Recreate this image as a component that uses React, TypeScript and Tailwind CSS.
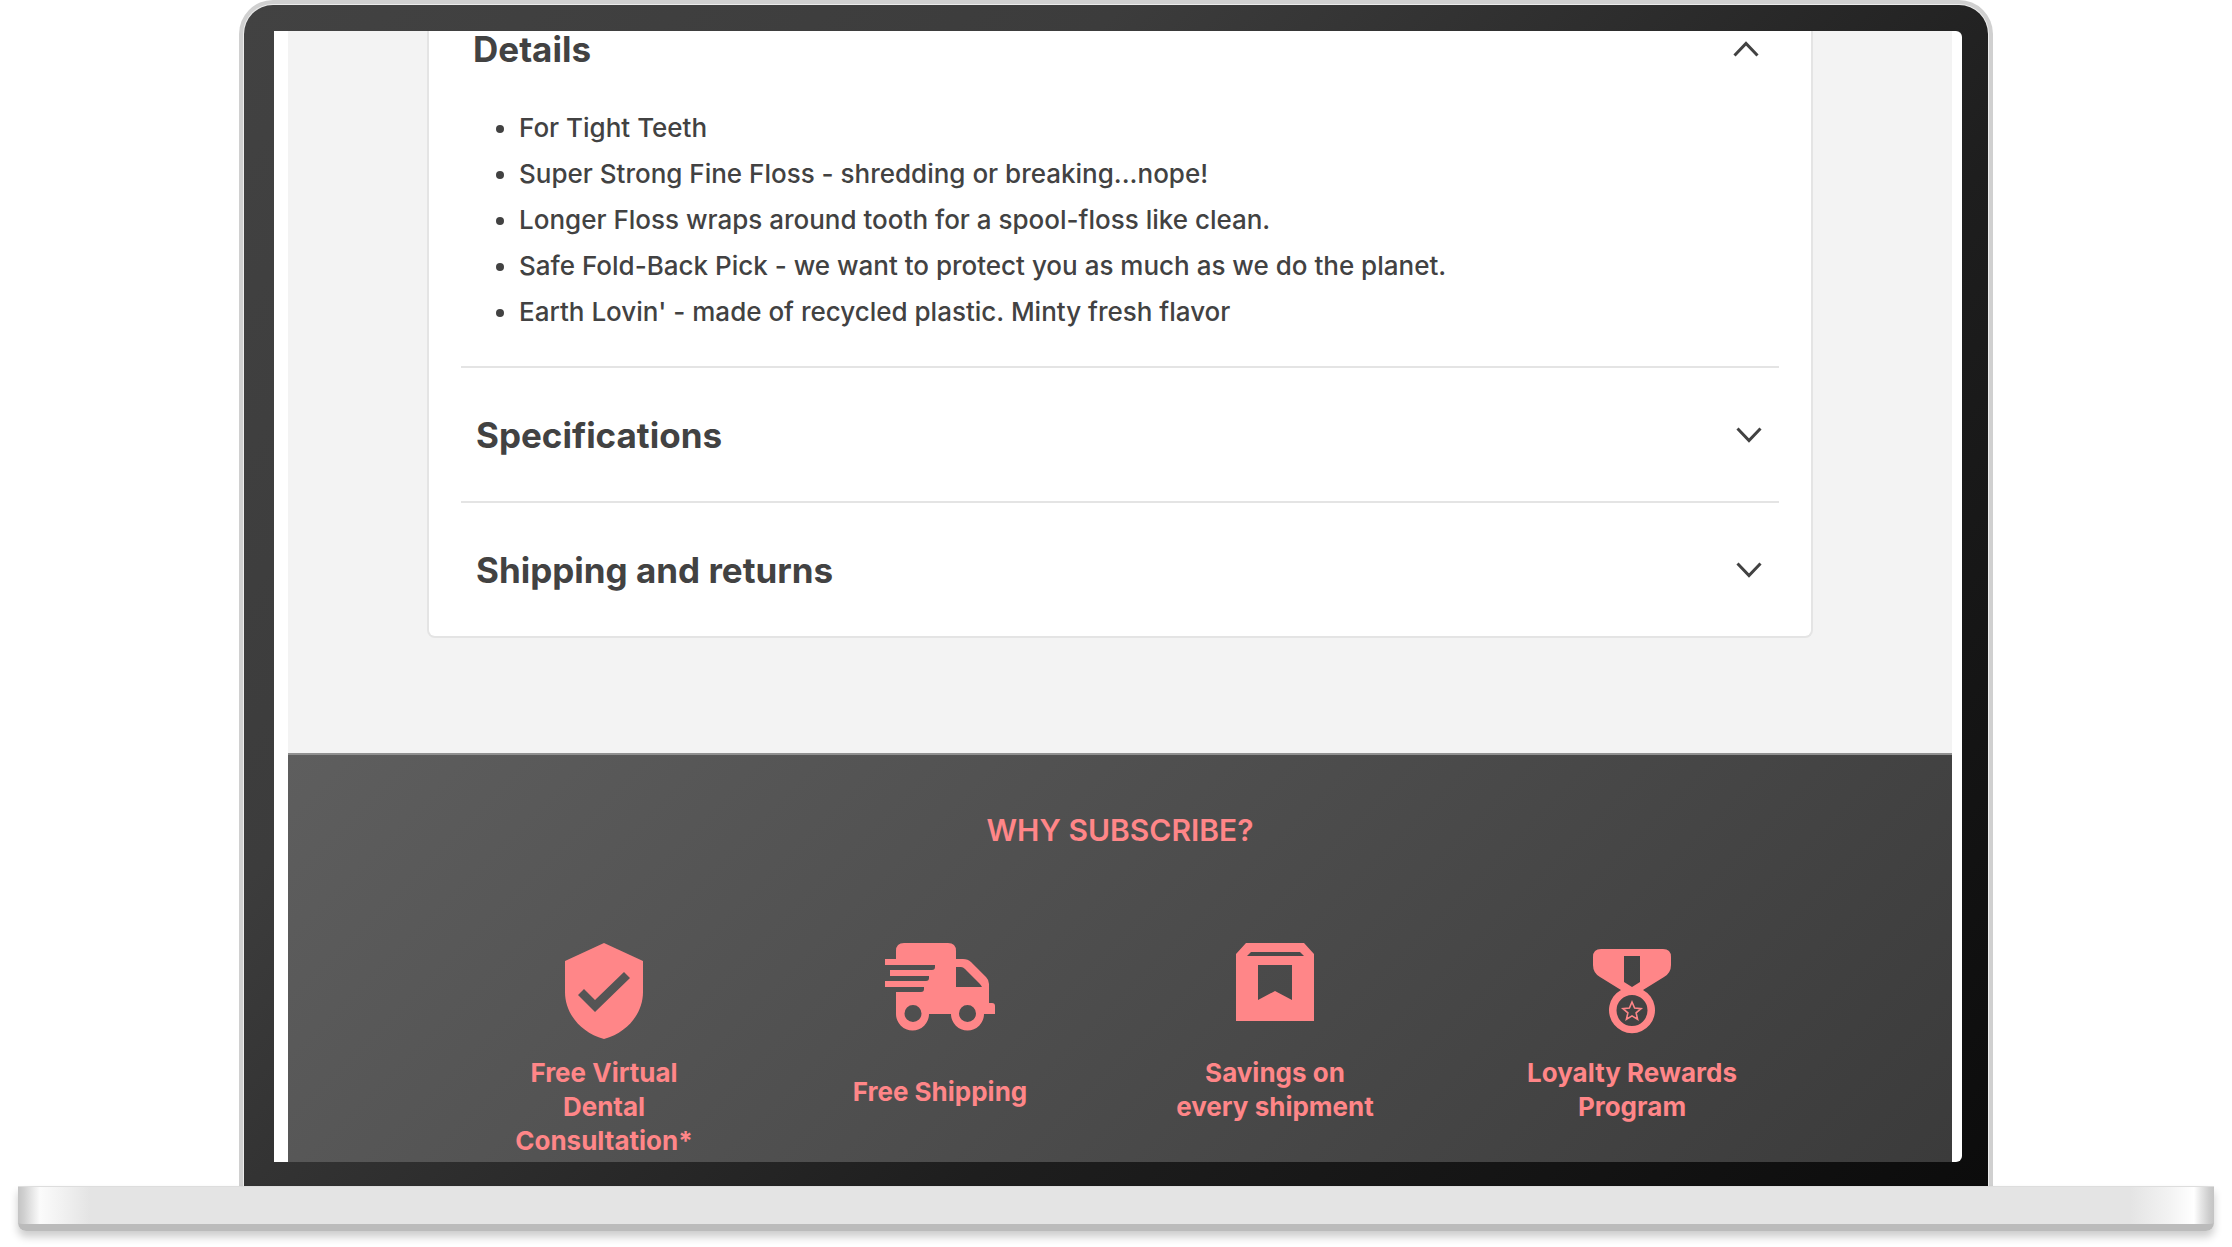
import { useState, type ReactNode } from "react";

const details = [
  "For Tight Teeth",
  "Super Strong Fine Floss - shredding or breaking...nope!",
  "Longer Floss wraps around tooth for a spool-floss like clean.",
  "Safe Fold-Back Pick - we want to protect you as much as we do the planet.",
  "Earth Lovin' - made of recycled plastic. Minty fresh flavor",
];

function Chevron({ open }: { open: boolean }) {
  return (
    <svg width="26" height="16" viewBox="0 0 26 16" fill="none" stroke="currentColor" strokeWidth="3">
      <path d={open ? "M1.5 14.5 13 2.5l11.5 12" : "M1.5 1.5 13 13.5l11.5-12"} />
    </svg>
  );
}

function Shield() {
  return (
    <svg width="80" height="96" viewBox="0 0 80 96" fill="currentColor">
      <path
        fillRule="evenodd"
        d="M40 0 79 18v31c0 20-14 40-39 47C15 89 1 69 1 49V18zM60 29 31 57l-11-11-6 6 17 17 35-34z"
      />
    </svg>
  );
}

function Truck() {
  return (
    <svg width="110" height="88" viewBox="0 0 110 88" fill="currentColor">
      <path
        fillRule="evenodd"
        d="M11 16V8q0-8 8-8h44q8 0 8 8v8h7q5 0 8 3l15 15q3 3 3 7v19h3q3 0 3 3v8H99a16.500 16.500 0 1 1-33 0H44a16.500 16.500 0 1 1-33 0V49h25q3 0 3-3v-2H0v-6h41q3 0 3-3v-2H5v-6h42q3 0 3-3v-2H0v-6zM71 24v20h26q-1-2-3-4L80 26q-2-2-4-2zM28 62a8.500 8.500 0 1 0 0 17a8.500 8.500 0 1 0 0-17zM82.500 62a8.500 8.500 0 1 0 0 17a8.500 8.500 0 1 0 0-17z"
      />
    </svg>
  );
}

function Box() {
  return (
    <svg width="78" height="78" viewBox="0 0 78 78" fill="currentColor">
      <path fillRule="evenodd" d="M10 0h58l10 11v67H0V11zM15 9l-4 4h57l-4-4zM22 22v35l17-9 17 9V22z" />
    </svg>
  );
}

function Medal() {
  return (
    <svg width="78" height="85" viewBox="0 0 78 85" fill="currentColor">
      <path
        fillRule="evenodd"
        d="M8 0h62q8 0 8 8v8q0 8-7 12L50 41a23 23 0 1 1-22 0L7 28q-7-4-7-12V8q0-8 8-8zM31 7v26l8 5 8-5V7zM39 46a15.500 15.500 0 1 0 0 31a15.500 15.500 0 1 0 0-31z"
      />
      <path
        d="m39 53 2.600 6 6.500.6-5 4.300 1.500 6.400-5.600-3.400-5.600 3.400 1.500-6.400-5-4.300 6.500-.6z"
        fill="none"
        stroke="currentColor"
        strokeWidth="1.600"
      />
    </svg>
  );
}

type PanelProps = {
  title: string;
  children?: ReactNode;
  defaultOpen?: boolean;
};

function Panel({ title, children, defaultOpen = false }: PanelProps) {
  const [open, setOpen] = useState(defaultOpen);
  return (
    <section className={defaultOpen ? "pb-[31px]" : "border-t-2 border-[#e4e4e4]"}>
      <h2>
        <button
          type="button"
          aria-expanded={open}
          onClick={() => setOpen(!open)}
          className={
            defaultOpen
              ? "flex h-9 w-full items-center justify-between pr-5 pl-3 text-[35px] leading-9 font-bold"
              : "flex h-[133px] w-full items-center justify-between pr-[17px] pl-[15px] text-[35px] leading-9 font-bold"
          }
        >
          {title}
          <Chevron open={open} />
        </button>
      </h2>
      {open && children}
    </section>
  );
}

const perks = [
  { icon: <Shield />, iconBox: "h-[113px]", label: ["Free Virtual", "Dental", "Consultation*"] },
  { icon: <Truck />, iconBox: "h-[132px]", label: ["Free Shipping"] },
  { icon: <Box />, iconBox: "h-[113px]", label: ["Savings on", "every shipment"] },
  { icon: <Medal />, iconBox: "h-[113px] pt-1.5", label: ["Loyalty Rewards", "Program"] },
];

export default function App() {
  return (
    <div className="min-h-screen overflow-hidden bg-white font-['Inter',sans-serif] text-[#424242]">
      {/* lid */}
      <div className="mx-[239px] rounded-t-[34px] border-4 border-b-0 border-[#d0d0d0] bg-[#ececec] px-px pt-px">
        <div className="rounded-t-[29px] bg-[linear-gradient(135deg,#424242,#3c3c3c_30%,#1e1e1e_65%,#0c0c0c)] pt-[26px] pr-[26px] pb-6 pl-[30px]">
          <div className="rounded-r-md bg-white pr-[10px] pl-[14px]">
            <main className="bg-[#f3f3f3] px-[139px] pb-[115px]">
              <div className="rounded-b-lg border-2 border-t-0 border-[#e4e4e4] bg-white px-8">
                <Panel title="Details" defaultOpen>
                  <ul className="list-disc pt-[38px] pl-[58px] text-[26px] leading-[46px] font-medium">
                    {details.map((item) => (
                      <li key={item}>{item}</li>
                    ))}
                  </ul>
                </Panel>
                <Panel title="Specifications" />
                <Panel title="Shipping and returns" />
              </div>
            </main>
            <section className="h-[409px] border-t-2 border-[#909090] bg-[linear-gradient(135deg,#5e5e5e,#3b3b3b)] bg-origin-border pt-[55px] text-[#ff8688]">
              <h2 className="text-center text-[30px] leading-10 font-semibold">WHY SUBSCRIBE?</h2>
              <ul className="grid grid-cols-[336fr_336fr_334fr_380fr] pt-[93px] pr-[130px] pl-[148px] text-center text-[26px] leading-[34px] font-bold">
                {perks.map(({ icon, iconBox, label }) => (
                  <li key={label[0]} className="flex flex-col items-center">
                    <div className={iconBox}>{icon}</div>
                    {label.map((line) => (
                      <span key={line}>{line}</span>
                    ))}
                  </li>
                ))}
              </ul>
            </section>
          </div>
        </div>
      </div>
      {/* base */}
      <div className="mx-[18px] h-[45px] rounded-b-lg border-t border-b-7 border-t-[#ddd] border-b-[#bbb] bg-[linear-gradient(90deg,#c4c4c4,#d0d0d0_6px,#e6e6e6_14px,#fbfbfb_22px,#f3f3f3_40px,#e4e4e4_72px,#e4e4e4_calc(100%-84px),#f3f3f3_calc(100%-44px),#fff_calc(100%-20px),#e6e6e6_calc(100%-13px),#cdcdcd_calc(100%-5px),#c4c4c4)] shadow-[0_6px_8px_#0003]" />
    </div>
  );
}
